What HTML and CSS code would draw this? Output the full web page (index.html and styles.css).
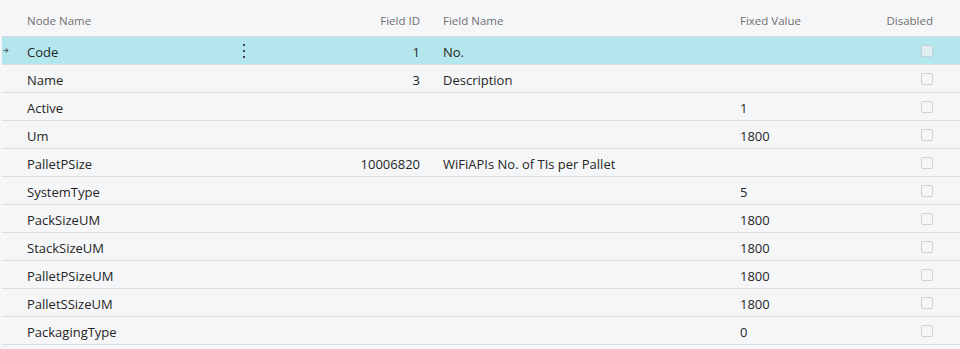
FILE: index.html
```html
<!DOCTYPE html>
<html>
<head>
<meta charset="utf-8">
<link rel="stylesheet" href="styles.css">
</head>
<body>
<div class="grid">
  <div class="row head">
    <div class="c ind"></div>
    <div class="c name">Node Name</div>
    <div class="c menu"></div>
    <div class="c fid">Field ID</div>
    <div class="c fname">Field Name</div>
    <div class="c fval">Fixed Value</div>
    <div class="c dis">Disabled</div>
  </div>
  <div class="row sel">
    <div class="c ind"><svg width="6" height="7" viewBox="0 0 6 7"><path d="M0.5 3.5H5M2.8 1.2L5 3.5L2.8 5.8" fill="none" stroke="#555" stroke-width="1"/></svg></div>
    <div class="c name">Code</div>
    <div class="c menu"><span class="dots"><i></i><i></i><i></i></span></div>
    <div class="c fid">1</div>
    <div class="c fname">No.</div>
    <div class="c fval"></div>
    <div class="c dis"><span class="cb"></span></div>
  </div>
  <div class="row">
    <div class="c ind"></div><div class="c name">Name</div><div class="c menu"></div>
    <div class="c fid">3</div><div class="c fname">Description</div><div class="c fval"></div>
    <div class="c dis"><span class="cb"></span></div>
  </div>
  <div class="row">
    <div class="c ind"></div><div class="c name">Active</div><div class="c menu"></div>
    <div class="c fid"></div><div class="c fname"></div><div class="c fval">1</div>
    <div class="c dis"><span class="cb"></span></div>
  </div>
  <div class="row">
    <div class="c ind"></div><div class="c name">Um</div><div class="c menu"></div>
    <div class="c fid"></div><div class="c fname"></div><div class="c fval">1800</div>
    <div class="c dis"><span class="cb"></span></div>
  </div>
  <div class="row">
    <div class="c ind"></div><div class="c name">PalletPSize</div><div class="c menu"></div>
    <div class="c fid">10006820</div><div class="c fname">WiFiAPIs No. of TIs per Pallet</div><div class="c fval"></div>
    <div class="c dis"><span class="cb"></span></div>
  </div>
  <div class="row">
    <div class="c ind"></div><div class="c name">SystemType</div><div class="c menu"></div>
    <div class="c fid"></div><div class="c fname"></div><div class="c fval">5</div>
    <div class="c dis"><span class="cb"></span></div>
  </div>
  <div class="row">
    <div class="c ind"></div><div class="c name">PackSizeUM</div><div class="c menu"></div>
    <div class="c fid"></div><div class="c fname"></div><div class="c fval">1800</div>
    <div class="c dis"><span class="cb"></span></div>
  </div>
  <div class="row">
    <div class="c ind"></div><div class="c name">StackSizeUM</div><div class="c menu"></div>
    <div class="c fid"></div><div class="c fname"></div><div class="c fval">1800</div>
    <div class="c dis"><span class="cb"></span></div>
  </div>
  <div class="row">
    <div class="c ind"></div><div class="c name">PalletPSizeUM</div><div class="c menu"></div>
    <div class="c fid"></div><div class="c fname"></div><div class="c fval">1800</div>
    <div class="c dis"><span class="cb"></span></div>
  </div>
  <div class="row">
    <div class="c ind"></div><div class="c name">PalletSSizeUM</div><div class="c menu"></div>
    <div class="c fid"></div><div class="c fname"></div><div class="c fval">1800</div>
    <div class="c dis"><span class="cb"></span></div>
  </div>
  <div class="row">
    <div class="c ind"></div><div class="c name">PackagingType</div><div class="c menu"></div>
    <div class="c fid"></div><div class="c fname"></div><div class="c fval">0</div>
    <div class="c dis"><span class="cb"></span></div>
  </div>
</div>
</body>
</html>
```
FILE: styles.css
```css
html, body {
  margin: 0;
  padding: 0;
  background: #f5f6f8;
}
body {
  font-family: "Open Sans", "Noto Sans", sans-serif;
  font-size: 13px;
  color: #262626;
  overflow: hidden;
}
.grid {
  padding-left: 2px;
}
.row {
  display: grid;
  grid-template-columns: 18px 200px 48px 164px 298px 130px 85px 1fr;
  height: 27px;
  border-bottom: 1px solid #dcdde0;
  align-items: center;
}
.row .c {
  padding-top: 2px;
}
.row.head {
  height: 36px;
  font-size: 11.5px;
  color: #707070;
  align-items: start;
}
.row.head .c {
  padding-top: 13px;
}
.row.sel {
  background: #b4e7ed;
}
.c {
  white-space: nowrap;
  overflow: hidden;
}
.row .ind {
  display: flex;
  align-items: center;
  padding-left: 1px;
  padding-top: 0;
}
.name {
  padding-left: 7px;
}
.row .menu {
  display: flex;
  justify-content: center;
  padding-top: 0;
}
.dots {
  display: flex;
  flex-direction: column;
  gap: 4px;
  margin-left: 0;
}
.dots i {
  display: block;
  width: 2px;
  height: 2px;
  background: #444;
}
.fid {
  text-align: right;
  padding-right: 12px;
}
.fname {
  padding-left: 11px;
}
.fval {
  padding-left: 10px;
}
.row .dis {
  padding-right: 12px;
  padding-top: 0;
  display: flex;
  justify-content: flex-end;
}
.row.head .dis {
  display: block;
  text-align: right;
  padding-top: 13px;
}
.cb {
  display: block;
  width: 10px;
  height: 10px;
  border: 1px solid #cfd0d2;
  border-radius: 2px;
  background: #f5f6f8;
}
.sel .cb {
  background: #e0eff2;
  border-color: #c3cfd2;
}
```
